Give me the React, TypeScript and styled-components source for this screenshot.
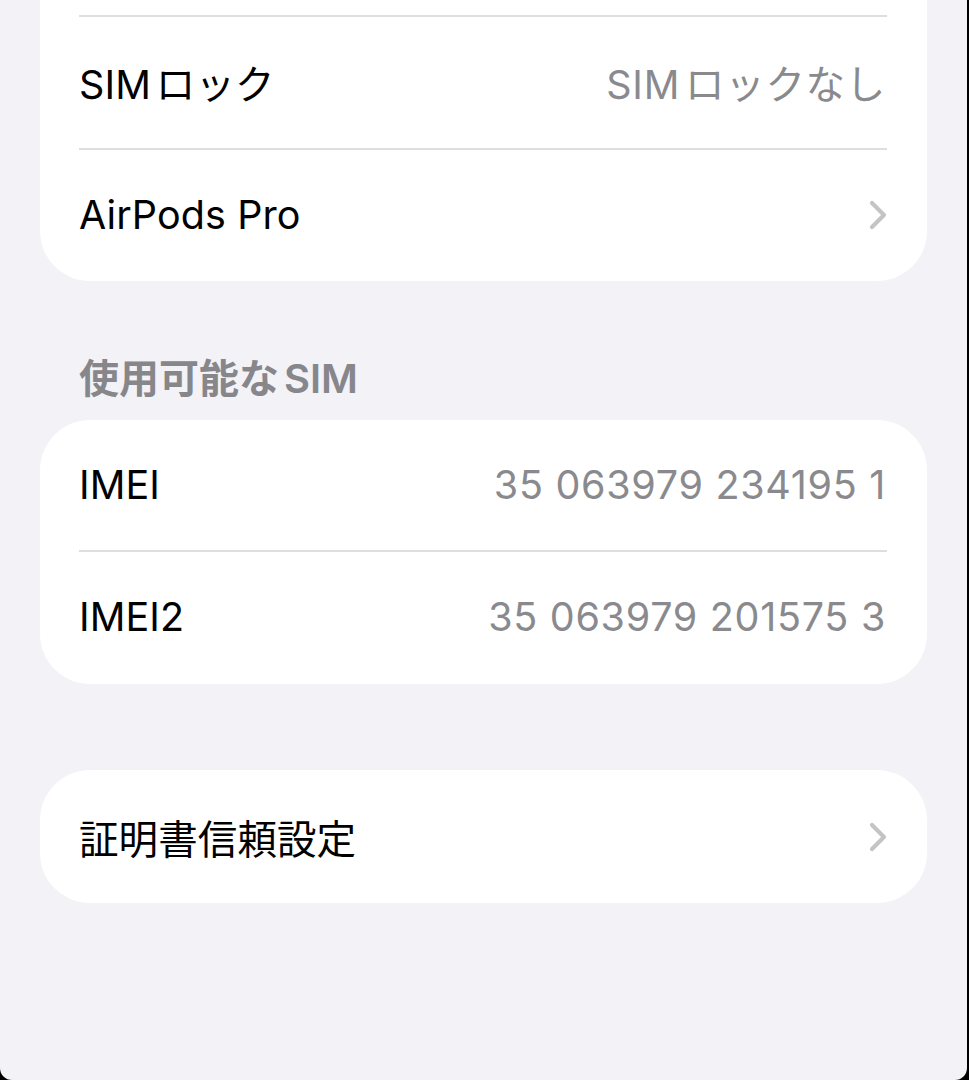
import React from "react";
import styled, { createGlobalStyle, css } from "styled-components";

const GlobalStyle = createGlobalStyle`
  html, body {
    margin: 0;
    padding: 0;
    background: #000;
  }
  body {
    font-family: Inter, "Noto Sans CJK JP", "Noto Sans", sans-serif;
    -webkit-font-smoothing: antialiased;
    text-autospace: normal;
  }
`;

const Screen = styled.div`
  width: 967px;
  height: 1080px;
  background: #f2f2f7;
  border-radius: 0 0 12px 12px;
  overflow: hidden;
  padding: 0 40px;
  box-sizing: border-box;
  display: flex;
  flex-direction: column;
`;

const Card = styled.div<{ $clipTop?: boolean }>`
  background: #fff;
  border-radius: 50px;
  overflow: hidden;
  flex-shrink: 0;
  ${(p) =>
    p.$clipTop &&
    css`
      border-top-left-radius: 0;
      border-top-right-radius: 0;
    `}
`;

const CutRow = styled.div`
  height: 15px;
`;

const Row = styled.div<{ $divider?: boolean; $h?: number }>`
  height: ${(p) => p.$h ?? 133}px;
  display: flex;
  align-items: center;
  justify-content: space-between;
  padding: 0 41px 0 39px;
  position: relative;
  ${(p) =>
    p.$divider &&
    css`
      &::before {
        content: "";
        position: absolute;
        top: 0;
        left: 39px;
        right: 40px;
        height: 2px;
        background: #dedee1;
      }
    `}
`;

const Label = styled.span`
  font-size: 39.5px;
  color: #000;
  letter-spacing: 0.1px;
`;

const Value = styled.span`
  font-size: 39.5px;
  color: #8a8a8e;
  letter-spacing: 0.7px;
`;

const SectionHeader = styled.div`
  height: 139px;
  flex-shrink: 0;
  display: flex;
  align-items: flex-end;
  padding: 0 0 21px 39px;
  box-sizing: border-box;
  font-size: 40px;
  font-weight: 600;
  color: #86868b;
  line-height: 40px;
`;

const Spacer = styled.div<{ $h: number }>`
  height: ${(p) => p.$h}px;
  flex-shrink: 0;
`;

const Chevron = () => (
  <svg width="20" height="32" viewBox="0 0 20 32" style={{ marginRight: -2 }}>
    <path
      d="M4 4 L16 16 L4 28"
      fill="none"
      stroke="#c4c4c7"
      strokeWidth="4.2"
      strokeLinecap="round"
      strokeLinejoin="round"
    />
  </svg>
);

const App: React.FC = () => {
  return (
    <>
      <GlobalStyle />
      <Screen>
        <Card $clipTop>
          <CutRow />
          <Row $divider>
            <Label>SIMロック</Label>
            <Value>SIMロックなし</Value>
          </Row>
          <Row $divider>
            <Label>AirPods Pro</Label>
            <Chevron />
          </Row>
        </Card>

        <SectionHeader>使用可能なSIM</SectionHeader>

        <Card>
          <Row $h={130}>
            <Label>IMEI</Label>
            <Value>35 063979 234195 1</Value>
          </Row>
          <Row $divider $h={134}>
            <Label>IMEI2</Label>
            <Value>35 063979 201575 3</Value>
          </Row>
        </Card>

        <Spacer $h={86} />

        <Card>
          <Row>
            <Label>証明書信頼設定</Label>
            <Chevron />
          </Row>
        </Card>
      </Screen>
    </>
  );
};

export default App;
